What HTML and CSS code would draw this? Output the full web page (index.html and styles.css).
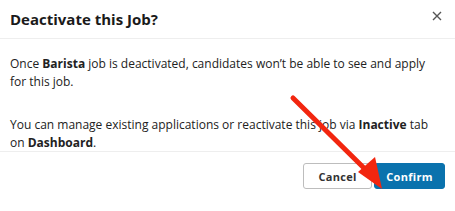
FILE: index.html
```html
<!DOCTYPE html>
<html>
<head>
<meta charset="utf-8">
<link rel="stylesheet" href="styles.css">
</head>
<body>
<div class="modal">
  <div class="modal-header">
    <h2 class="title">Deactivate this Job?</h2>
    <button class="close" aria-label="Close">
      <svg width="10" height="10" viewBox="0 0 10 10"><path d="M1 1L9 9M9 1L1 9" stroke="#555" stroke-width="1.4" fill="none"/></svg>
    </button>
  </div>
  <div class="modal-body">
    <p>Once <b>Barista</b> job is deactivated, candidates won’t be able to see and apply for this job.</p>
    <p>You can manage existing applications or reactivate this job via <b>Inactive</b> tab on <b>Dashboard</b>.</p>
  </div>
  <div class="modal-footer">
    <button class="btn btn-secondary">Cancel</button>
    <button class="btn btn-primary">Confirm</button>
  </div>
  <svg class="arrow" width="455" height="211" viewBox="0 0 455 211">
    <line x1="293" y1="98" x2="368" y2="172" stroke="#f2260f" stroke-width="5" stroke-linecap="round"/>
    <polygon points="382,189 358,172 375,157" fill="#f2260f"/>
  </svg>
</div>
</body>
</html>
```
FILE: styles.css
```css
html, body {
  margin: 0;
  padding: 0;
  background: #fff;
}
body {
  font-family: "Open Sans", "Noto Sans", sans-serif;
  color: #222;
}
.modal {
  position: relative;
  width: 455px;
  height: 211px;
  display: flex;
  flex-direction: column;
}
.modal-header {
  height: 38px;
  border-bottom: 1px solid #eeeeee;
  display: flex;
  align-items: center;
  justify-content: space-between;
  padding: 0 12px 0 10px;
}
.title {
  margin: 0;
  font-size: 15px;
  font-weight: 700;
  color: #1a1a1a;
}
.close {
  border: 0;
  background: none;
  padding: 0;
  width: 12px;
  height: 12px;
  display: flex;
  align-items: center;
  justify-content: center;
  margin-top: -6px;
}
.modal-body {
  padding: 16px 22px 0 10px;
  height: 113px;
  box-sizing: border-box;
  border-bottom: 1px solid #eeeeee;
}
.modal-body p {
  margin: 0 0 25px 0;
  font-size: 12px;
  line-height: 18px;
  color: #222;
}
.modal-footer {
  display: flex;
  justify-content: flex-end;
  gap: 2px;
  padding: 11px 10px 0 0;
}
.btn {
  height: 26px;
  border-radius: 3px;
  font-family: "Open Sans", "Noto Sans", sans-serif;
  font-size: 11px;
  font-weight: 700;
  padding: 0;
  letter-spacing: 0.3px;
}
.btn-secondary {
  background: #fff;
  border: 1px solid #bdbdbd;
  color: #333;
  width: 69px;
}
.btn-primary {
  background: #0a72ad;
  border: 1px solid #0a72ad;
  color: #fff;
  width: 71px;
}
.arrow {
  position: absolute;
  left: 0;
  top: 0;
  pointer-events: none;
}
```
